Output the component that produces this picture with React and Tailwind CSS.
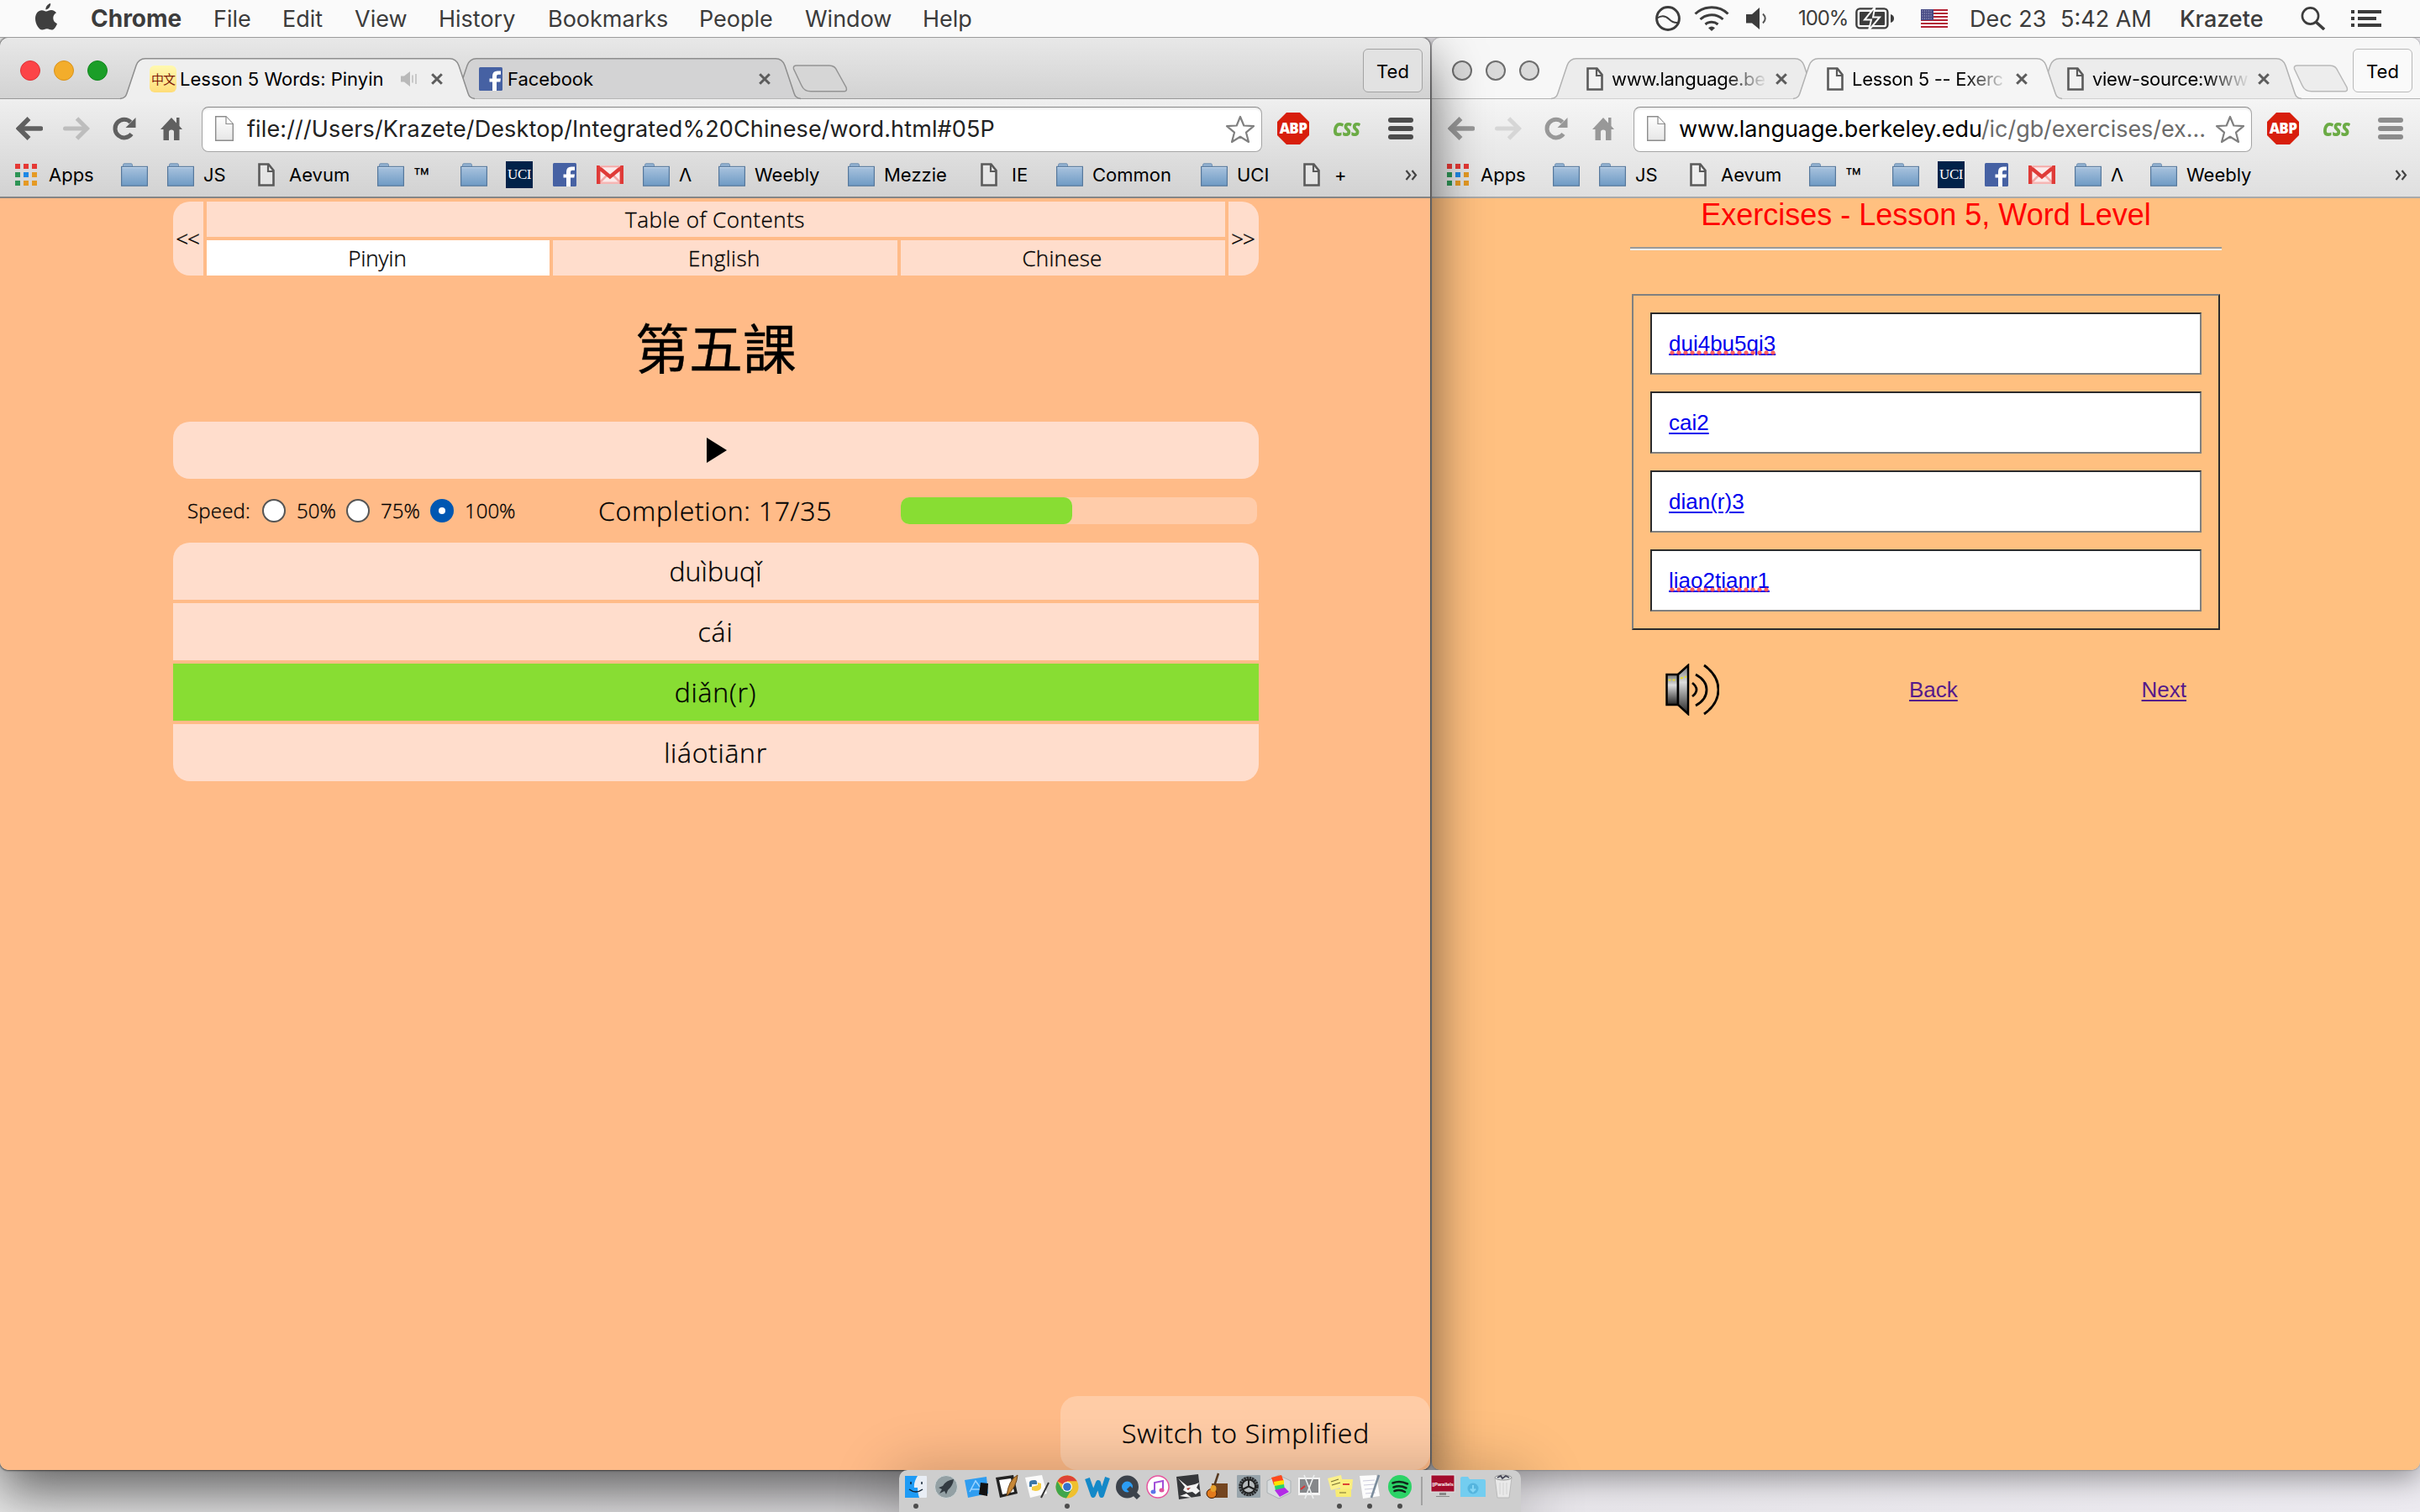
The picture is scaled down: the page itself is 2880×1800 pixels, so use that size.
import React from "react";

/* ---------- small glyphs ---------- */

const PageIcon = ({ className = "w-5 h-7" }) => (
  <svg viewBox="0 0 20 28" className={className} fill="none">
    <path d="M1.5 1.5H12.5L18.5 9V26.5H1.5Z" fill="#fff" fillOpacity=".35" stroke="#5a5a5a" strokeWidth="2.6" />
    <path d="M12 2V10H18" stroke="#5a5a5a" strokeWidth="2.2" />
  </svg>
);

const PlainPage = () => (
  <svg viewBox="0 0 22 31" className="w-[22px] h-[31px]">
    <defs>
      <linearGradient id="pg" x1="0" y1="0" x2="0" y2="1">
        <stop offset="0" stopColor="#fff" />
        <stop offset="1" stopColor="#e6e6e6" />
      </linearGradient>
    </defs>
    <path d="M.7 .7H13L21.3 9.5V29.3H.7Z" fill="url(#pg)" stroke="#8c8c8c" strokeWidth="1.4" />
    <path d="M13 1V9.5H21" fill="#fff" stroke="#8c8c8c" strokeWidth="1.2" />
  </svg>
);

const Folder = () => (
  <svg viewBox="0 0 32 28" className="w-8 h-7">
    <defs>
      <linearGradient id="fold" x1="0" y1="0" x2="0" y2="1">
        <stop offset="0" stopColor="#a9c3de" />
        <stop offset="1" stopColor="#6e9ac4" />
      </linearGradient>
    </defs>
    <path d="M2.5 5V2.5Q2.5 .8 4 .8H12Q13.5 .8 13.5 2.5V5" fill="#93b2d2" stroke="#6f8fb0" />
    <rect x=".6" y="4.4" width="30.8" height="22.8" fill="url(#fold)" stroke="#56789c" strokeWidth="1.2" />
    <path d="M1.5 5.4H30.5" stroke="#c3d6ea" />
  </svg>
);

const Apps = () => (
  <span className="grid grid-cols-3 gap-x-1 gap-y-1 w-[26px] ml-[3px]">
    {["bg-[#e53935]", "bg-[#e53935]", "bg-[#e53935]", "bg-[#2e9455]", "bg-[#1e88e5]", "bg-[#e59a24]", "bg-[#2e9455]", "bg-[#e59a24]", "bg-[#e59a24]"].map((c, i) => (
      <span key={i} className={`h-1.5 ${c}`} />
    ))}
  </span>
);

const Uci = () => (
  <span className="w-8 h-8 bg-[#012249] text-white text-[17px] leading-8 text-center font-['Liberation_Serif',serif] tracking-[-0.5px]">UCI</span>
);

const Fb = () => (
  <svg viewBox="0 0 28 28" className="w-7 h-7 ml-0.5">
    <rect width="28" height="28" rx="1.5" fill="#4661a3" />
    <path d="M16 28V17.5H12.5V13.5H16V10.5Q16 4.5 22 4.5H26V8.8H23Q21 8.8 21 11V13.5H26L25.3 17.5H21V28Z" fill="#fff" />
  </svg>
);

const Gmail = () => (
  <svg viewBox="0 0 32 22" className="w-8 h-[22px]">
    <rect width="32" height="22" fill="#fbeaea" />
    <path d="M4 20L13 11M28 20L19 11" stroke="#f3a9a7" strokeWidth="2.5" />
    <path d="M4 20.8H28" stroke="#f6b6b4" strokeWidth="2.5" />
    <path d="M2.2 22V2L16 13.5L29.8 2V22" fill="none" stroke="#df3b38" strokeWidth="4.4" />
    <path d="M4.5 1.2H27.5" stroke="#f3a9a7" strokeWidth="2" />
  </svg>
);

const Close = () => (
  <svg viewBox="0 0 16 16" className="w-4 h-4 shrink-0">
    <path d="M2.2 2.2L13.8 13.8M13.8 2.2L2.2 13.8" stroke="#5c5c5c" strokeWidth="3" />
  </svg>
);

const Cjk = () => (
  <span className="w-8 h-8 rounded-md bg-linear-to-b from-[#fff9b0] to-[#ffdd78] text-[#7d1a08] text-[15px] leading-8 text-center tracking-[-1px] font-['Noto_Sans_CJK_SC',sans-serif] whitespace-nowrap">中文</span>
);

/* ---------- menu bar ---------- */

const menus = [
  ["File", "w-[82px]"],
  ["Edit", "w-[86px]"],
  ["View", "w-[100px]"],
  ["History", "w-[130px]"],
  ["Bookmarks", "w-[180px]"],
  ["People", "w-[126px]"],
  ["Window", "w-[140px]"],
  ["Help", "w-[60px]"],
];

function MenuBar() {
  return (
    <header className="relative z-30 flex items-center h-11 w-full bg-[#fafafa] text-[27px] leading-none text-[#3c3c3c] whitespace-nowrap">
      <svg viewBox="0 0 26 32" className="w-[26px] h-8 ml-[42px] mb-1 shrink-0" fill="#3f3f3f">
        <path d="M18.2 0C18.4 3.8 15.5 7.4 12.4 7.6C12 4 15 .5 18.2 0Z" />
        <path d="M13.2 9.6C14.6 9.6 16.3 8 19 8C21.6 8 23.7 9.4 25 11.3C19.5 14.4 20.4 22 26 24.2C24.8 27.5 22.3 31.6 19.5 31.6C17.3 31.6 16.6 30.3 13.9 30.3C11.2 30.3 10.3 31.6 8.3 31.6C4.4 31.6 0 24.3 0 18.2C0 11.7 3.9 8.2 7.7 8.2C10.2 8.2 12 9.6 13.2 9.6Z" />
      </svg>
      <span className="ml-10 w-[146px] text-[28px] font-bold shrink-0">Chrome</span>
      {menus.map(([t, w]) => (
        <span key={t} className={`${w} shrink-0`}>{t}</span>
      ))}
      <div className="ml-auto flex items-center mr-[46px]">
        <svg viewBox="0 0 30 30" className="w-[30px] h-[30px]" fill="none" stroke="#3c3c3c">
          <circle cx="15" cy="15" r="13.4" strokeWidth="3" />
          <path d="M2 14.5C9 10 13 12.5 16 15.5C19 18.5 23 20.5 27 20" strokeWidth="2" />
        </svg>
        <svg viewBox="0 0 42 30" className="w-[42px] h-[30px] ml-4" fill="none" stroke="#3c3c3c" strokeWidth="3">
          <path d="M1.5 9.5C12 -.8 30 -.8 40.5 9.5" />
          <path d="M7.5 16C15 9 27 9 34.5 16" />
          <path d="M13.5 22C18 18.2 24 18.2 28.5 22" />
          <path d="M17 26.2Q21 23 25 26.2L21 30Z" fill="#3c3c3c" stroke="none" />
        </svg>
        <svg viewBox="0 0 26 26" className="w-[26px] h-[26px] ml-5">
          <path d="M0 8H7L16 0V26L7 18.5H0Z" fill="#3c3c3c" />
          <path d="M20 7.5Q25.5 13 20 18.5" fill="none" stroke="#555" strokeWidth="2" />
        </svg>
        <span className="ml-9 w-[68px] text-[24px] tracking-[-1.1px]">100%</span>
        <svg viewBox="0 0 46 26" className="w-[46px] h-[26px]">
          <rect x="1.4" y="1.4" width="37" height="23" rx="4" fill="none" stroke="#3c3c3c" strokeWidth="2.4" />
          <rect x="5" y="5" width="30" height="16" rx="1" fill="#3c3c3c" />
          <path d="M42 8Q46 9 46 13Q46 17 42 18Z" fill="#3c3c3c" />
          <path d="M23.5 -1L11 14.5H19L16 27L29 11.5H21Z" fill="#3c3c3c" stroke="#fafafa" strokeWidth="2" />
        </svg>
        <svg viewBox="0 0 32 22" className="w-8 h-[22px] ml-8">
          <rect width="32" height="22" fill="#fff" />
          {[0, 1, 2, 3, 4, 5].map((i) => (
            <rect key={i} y={i * 4} width="32" height="2" fill="#b22234" />
          ))}
          <rect width="15" height="13" fill="#474a85" />
          {[2, 5, 8, 11].map((y) => (
            <path key={y} d={`M1.5 ${y}H14`} stroke="#c9cbe2" strokeWidth="1" strokeDasharray="1 1.5" />
          ))}
        </svg>
        <span className="ml-[26px] w-[108px]">Dec 23</span>
        <span className="w-[142px]">5:42 AM</span>
        <span className="w-36 font-medium">Krazete</span>
        <svg viewBox="0 0 30 28" className="w-[30px] h-7" fill="none" stroke="#3c3c3c">
          <circle cx="11.5" cy="11" r="9.6" strokeWidth="2.6" />
          <path d="M18 18L28 27" strokeWidth="3.6" />
        </svg>
        <svg viewBox="0 0 36 20" className="w-9 h-5 ml-[30px]" fill="#3c3c3c">
          <path d="M0 0H4V4H0ZM0 8H4V12H0ZM0 16H4V20H0ZM8 0H36V4H8ZM8 8H30V12H8ZM8 16H36V20H8Z" />
        </svg>
      </div>
    </header>
  );
}

/* ---------- browser chrome ---------- */

function Tab({ w, width, overlap, pad, icon, title, fade, sound, front, dim }) {
  const outline = `M0 48.5C6 47.5 7 45 8 42L19 9Q22 .8 30 .8H${w - 30}Q${w - 22} .8 ${w - 19} 9L${w - 8} 42C${w - 7} 45 ${w - 6} 47.5 ${w} 48.5`;
  const fill = front ? (dim ? "#f5f5f5" : "#efefef") : dim ? "#ececec" : "#d3d3d4";
  return (
    <div className={`relative flex items-center h-[49px] shrink-0 ${width} ${overlap} ${pad} ${front ? "z-10" : ""}`}>
      <svg viewBox={`0 0 ${w} 49`} className="absolute inset-0 w-full h-full overflow-visible">
        <path d={outline + (front ? "V50H0Z" : "Z")} fill={fill} />
        <path d={outline} fill="none" stroke={dim ? "#b2b2b2" : "#8e8e8e"} strokeWidth="1.5" />
      </svg>
      <span className="relative w-8 h-8 flex items-center justify-center shrink-0">{icon}</span>
      <span className={`relative ml-1 flex-1 whitespace-nowrap text-[22px] leading-8 text-black ${fade ? "tracking-[-0.3px] [mask-image:linear-gradient(to_right,black_72%,transparent)]" : ""}`}>{title}</span>
      {sound && (
        <svg viewBox="0 0 20 18" className="relative w-5 h-[18px] mr-[7px]">
          <path d="M0 5.5H4L11 0V18L4 12.5H0Z" fill="#b9b9b9" />
          <path d="M14 4.5V13.5M18 3V15" stroke="#c4c4c4" strokeWidth="1.8" />
        </svg>
      )}
      <span className="relative flex ml-2"><Close /></span>
    </div>
  );
}

const NewTab = ({ dim }) => (
  <svg viewBox="0 0 66 33" className="w-[66px] h-[33px] mb-2 shrink-0 -ml-2.5">
    <path d="M5 1H44Q51 1 53.5 8L64 27Q65.5 31.5 62 31.8H22Q14 31.8 11 25L1.5 5Q.5 1 5 1Z" fill={dim ? "#ededed" : "#d6d6d6"} stroke={dim ? "#b9b9b9" : "#949494"} strokeWidth="1.5" />
  </svg>
);

const marks = [
  { w: "w-[129px]", icon: <Apps />, label: "Apps" },
  { w: "w-[55px]", icon: <Folder /> },
  { w: "w-[102px]", icon: <Folder />, label: "JS" },
  { w: "w-[148px]", icon: <PageIcon className="w-5 h-7 mx-1.5" />, label: "Aevum" },
  { w: "w-[99px]", icon: <Folder />, label: <span className="text-[31px] leading-8 pt-2">™</span> },
  { w: "w-[54px]", icon: <Folder /> },
  { w: "w-[54px]", icon: <Uci /> },
  { w: "w-[54px]", icon: <Fb /> },
  { w: "w-[55px]", icon: <Gmail /> },
  { w: "w-[90px]", icon: <Folder />, label: "Λ" },
  { w: "w-[154px]", icon: <Folder />, label: "Weebly" },
  { w: "w-[152px]", icon: <Folder />, label: "Mezzie" },
  { w: "w-[96px]", icon: <PageIcon className="w-5 h-7 mx-1.5" />, label: "IE" },
  { w: "w-[172px]", icon: <Folder />, label: "Common" },
  { w: "w-[116px]", icon: <Folder />, label: "UCI" },
  { w: "w-[70px]", icon: <PageIcon className="w-5 h-7 mx-1.5" />, label: "+" },
];

function Toolbar({ dim, url, count }) {
  const c = dim ? "#989898" : "#606060";
  const off = dim ? "#d6d6d6" : "#bdbdbd";
  return (
    <div className={`h-[118px] border-b-2 bg-linear-to-b ${dim ? "from-[#f5f5f5] to-[#dfdfdf] border-[#a9a9a9]" : "from-[#efefef] to-[#d2d2d2] border-[#858585]"}`}>
      <div className="flex items-center h-[70px] pl-[19px]">
        <svg viewBox="0 0 32 28" className="w-8 h-7 shrink-0" fill="none" stroke={c} strokeWidth="5.5">
          <path d="M4 14H29.5" strokeLinecap="round" />
          <path d="M15.5 2L3.5 14L15.5 26" />
        </svg>
        <svg viewBox="0 0 32 28" className="w-8 h-7 ml-6 shrink-0" fill="none" stroke={off} strokeWidth="5">
          <path d="M28 14H2.5" strokeLinecap="round" />
          <path d="M16.5 2L28.5 14L16.5 26" />
        </svg>
        <svg viewBox="0 0 28 28" className="w-7 h-7 ml-[27px] shrink-0">
          <path d="M22.5 20.5A10.8 10.8 0 1 1 21.5 6.5" fill="none" stroke={c} strokeWidth="5" />
          <path d="M27.5 1V13H15.5Z" fill={c} />
        </svg>
        <svg viewBox="0 0 26 28" className="w-[26px] h-7 ml-[29px] shrink-0" fill={c}>
          <path d="M13 1L0 15H3.5V28H10V18Q10 15.5 13 15.5Q16 15.5 16 18V28H22.5V15H26L22.5 11V1H19V7.5Z" />
        </svg>
        <div className="flex items-center flex-1 min-w-0 h-[54px] mt-px ml-[23px] pl-[15px] pr-[7px] bg-white rounded-lg border-[1.5px] border-[#a5a5a5] border-t-[#8a8a8a] shadow-[inset_0_2px_2px_rgba(0,0,0,.08)]">
          <PlainPage />
          <span className={`flex-1 ml-4 whitespace-nowrap text-[27px] leading-9 text-[#222] ${dim ? "-tracking-[.05px]" : "tracking-[.13px]"}`}>{url}</span>
          <svg viewBox="0 0 36 34" className="w-9 h-[34px]">
            <path d="M18 2L22.3 12.5L34 13.2L25 20.7L28 32L18 25.8L8 32L11 20.7L2 13.2L13.7 12.5Z" fill="#fff" stroke="#808080" strokeWidth="2.2" strokeLinejoin="round" />
          </svg>
        </div>
        <div className="flex items-center w-[200px] shrink-0 pl-[18px]">
          <span className="w-[38px] h-[38px] bg-[#d81e0c] text-white text-[17px] font-extrabold leading-[38px] text-center tracking-[-0.6px] font-['Open_Sans',sans-serif] [clip-path:polygon(29%_0,71%_0,100%_29%,100%_71%,71%_100%,29%_100%,0_71%,0_29%)]">ABP</span>
          <span className="ml-7 w-10 text-[23px] leading-8 italic font-extrabold text-[#6bab45] tracking-[-0.8px] font-['Open_Sans',sans-serif] [transform:scaleX(.86)] origin-left">CSS</span>
          <span className={`ml-[26px] flex flex-col gap-1 w-[30px] ${dim ? "opacity-60" : ""}`}>
            <span className="h-1.5 rounded-full bg-[#4c4c4c]" />
            <span className="h-1.5 rounded-full bg-[#4c4c4c]" />
            <span className="h-1.5 rounded-full bg-[#4c4c4c]" />
          </span>
        </div>
      </div>
      <div className="flex items-center h-10 pl-[15px] text-[22px] leading-8 text-black">
        {marks.slice(0, count).map((m, i) => (
          <span key={i} className={`flex items-center shrink-0 whitespace-nowrap ${m.w}`}>
            <span className="flex items-center w-8 mr-[11px] shrink-0">{m.icon}</span>
            {m.label}
          </span>
        ))}
        <svg viewBox="0 0 15 13" className="w-[15px] h-[13px] ml-auto mr-[15px]" fill="none" stroke="#444" strokeWidth="2.2">
          <path d="M1.5 1L6 6.5L1.5 12M8.5 1L13 6.5L8.5 12" />
        </svg>
      </div>
    </div>
  );
}

const Ted = ({ dim }) => (
  <span className={`ml-auto mr-[9px] self-start mt-[13px] w-[71px] h-[52px] pt-0.5 rounded-md border-[1.5px] text-[22px] leading-[48px] text-center text-black ${dim ? "border-[#b9b9b9] bg-[#fafafa]" : "border-[#a3a3a3] bg-[#e2e2e2]"}`}>Ted</span>
);

/* ---------- left page ---------- */

const answers = [
  ["duìbuqǐ", "rounded-t-[20px] bg-[#fdc]", "tracking-[.1px]"],
  ["cái", "bg-[#fdc]", "tracking-[.9px]"],
  ["diǎn(r)", "bg-[#8d3]", "tracking-[.8px]"],
  ["liáotiānr", "rounded-b-[20px] bg-[#fdc]", "tracking-[.7px]"],
];

const speeds = [
  ["50%", "w-[74px]", false],
  ["75%", "w-[74px]", false],
  ["100%", "w-[70px]", true],
];

function PinyinPage() {
  return (
    <main className="relative flex-1 bg-[#fb8] text-black font-[350] font-['Open_Sans','Noto_Sans_CJK_TC',sans-serif] [-webkit-text-stroke:.35px_black]">
      <div className="flex flex-col w-[1292px] ml-[206px] pt-1">
        <nav className="grid grid-cols-[36px_408px_410px_386px_36px] grid-rows-[42px_42px] gap-1 text-[26px] leading-[42px] text-center tracking-[.5px]">
          <span className="row-span-2 flex items-center justify-center rounded-l-[20px] bg-[#fdc] tracking-[-1px] pr-0.5">&lt;&lt;</span>
          <span className="col-span-3 bg-[#fdc] pr-0.5">Table of Contents</span>
          <span className="row-span-2 flex items-center justify-center rounded-r-[20px] bg-[#fdc] tracking-[-1px] pr-0.5">&gt;&gt;</span>
          <span className="bg-white tracking-normal pr-0.5">Pinyin</span>
          <span className="bg-[#fdc] pr-0.5">English</span>
          <span className="bg-[#fdc] tracking-[.25px] pr-0.5">Chinese</span>
        </nav>
        <h1 className="flex items-center justify-center h-[174px] pb-[9px] text-[64px] leading-[64px] font-normal font-['Noto_Sans_CJK_TC',sans-serif]">第五課</h1>
        <div className="flex items-center justify-center h-[68px] pl-0.5 rounded-[20px] bg-[#fdc]">
          <svg viewBox="0 0 24 30" className="w-6 h-[30px]"><path d="M0 0L24 15L0 30Z" /></svg>
        </div>
        <div className="flex items-center h-[76px]">
          <div className="flex items-center w-[506px] pl-[17px] text-[24px] leading-8">
            <span className="w-[89px] tracking-[.2px]">Speed:</span>
            {speeds.map(([t, w, on]) => (
              <span key={t} className="flex items-center">
                <span className={`flex items-center justify-center w-7 h-7 rounded-full mr-[13px] ${on ? "bg-[#0057b2]" : "bg-white border-2 border-[#555]"}`}>
                  {on && <span className="w-2 h-2 rounded-full bg-white" />}
                </span>
                <span className={`${w} -mr-[15px]`}>{t}</span>
              </span>
            ))}
          </div>
          <span className="w-[360px] text-[32px] leading-10 tracking-[.7px]">Completion: 17/35</span>
          <div className="w-[424px] h-8 rounded-[10px] bg-[#fca]">
            <div className="w-[204px] h-8 rounded-[10px] bg-[#8d3]" />
          </div>
        </div>
        <ul className="flex flex-col gap-1 text-[32px] leading-[68px] text-center">
          {answers.map(([t, c, tr]) => (
            <li key={t} className={`h-[68px] pr-px ${c} ${tr}`}>{t}</li>
          ))}
        </ul>
      </div>
      <div className="absolute right-0 bottom-0 flex items-center justify-center w-[440px] h-[88px] pl-px rounded-[20px] bg-white/25 text-[32px] tracking-[.82px]">Switch to Simplified</div>
    </main>
  );
}

/* ---------- right page ---------- */

const words = [["dui4bu5qi3", true], ["cai2", false], ["dian(r)3", false], ["liao2tianr1", true]];

function ExercisePage() {
  return (
    <main className="flex-1 flex flex-col items-center bg-[#ffc080] text-[26px] font-['Liberation_Sans',Arial,sans-serif]">
      <h1 className="h-10 text-[36px] leading-10 text-[#f00]">Exercises - Lesson 5, Word Level</h1>
      <div className="mt-[18px] w-[704px] h-1 border-t-2 border-b-2 border-t-[#9a9a9a] border-b-[#eee]" />
      <div className="mt-[52px] flex flex-col gap-5 w-[700px] h-[400px] p-5 border-2 border-t-[#808080] border-l-[#808080] border-r-[#2b2b2b] border-b-[#2b2b2b]">
        {words.map(([t, bad]) => (
          <div key={t} className="flex items-center h-[74px] pl-5 bg-white border-2 border-t-[#2b2b2b] border-l-[#2b2b2b] border-r-[#808080] border-b-[#808080]">
            <span className="relative text-[#00e] underline underline-offset-[3px] decoration-2 leading-8">
              {t}
              {bad && <span className="absolute left-0 right-0 bottom-0.5 h-1.5 bg-[radial-gradient(circle,rgba(255,70,70,.85)_2.2px,transparent_3px)] bg-[length:8px_6px]" />}
            </span>
          </div>
        ))}
      </div>
      <div className="flex items-center mt-10 w-[620px] h-[62px] text-[#551a8b] underline decoration-2 underline-offset-[3px]">
        <svg viewBox="0 0 64 62" className="w-16 h-[62px]">
          <defs>
            <linearGradient id="spk" x1="0" y1="0" x2="0" y2="1">
              <stop offset="0" stopColor="#777" />
              <stop offset=".35" stopColor="#ddd" />
              <stop offset="1" stopColor="#222" />
            </linearGradient>
          </defs>
          <path d="M1.5 13H15V49H1.5Z" fill="url(#spk)" stroke="#000" strokeWidth="2.5" />
          <path d="M15 13L27 2V60L15 49Z" fill="url(#spk)" stroke="#000" strokeWidth="2.5" />
          <path d="M3.5 19.5H13M18 17.5L25 15.5" stroke="#e8dc30" strokeWidth="2" strokeDasharray="3 2" />
          <path d="M32 23Q42 31 32 39M36 13Q49 20 49 31Q49 43 36 50M46 2Q63 14 63 31Q63 48 46 60" fill="none" stroke="#000" strokeWidth="2.8" />
        </svg>
        <span className="ml-[226px]">Back</span>
        <span className="ml-auto">Next</span>
      </div>
    </main>
  );
}

/* ---------- dock ---------- */

const dock = [
  { dot: 1, art: <><rect x="1" y="1" width="26" height="26" rx="1" fill="#e9eef5" /><path d="M1 1H16Q11 9 12 15H16Q16 21 18 27H1Z" fill="#1e9bf5" /><path d="M8 8V11M21 8V11" stroke="#123" strokeWidth="1.5" /><path d="M6 17Q14 23 22 17" fill="none" stroke="#123" strokeWidth="1.5" /></> },
  { art: <><circle cx="14" cy="14" r="13.5" fill="#93a0a4" stroke="#cfd6d8" /><path d="M23 5Q14 6 10 13L5 15L9 17L6 22L12 19L14 23L16 18Q22 13 23 5Z" fill="#333b42" /></> },
  { art: <><path d="M0 6L26 2L28 22L4 27Z" fill="#2f9df0" /><path d="M6 20L13 7L21 18M8 17H20" fill="none" stroke="#9bd4ff" strokeWidth="1.5" /><path d="M19 9L28 10L27 25L17 23Z" fill="#111" /></> },
  { art: <><path d="M1 3L22 0L27 22L6 27Z" fill="#222" /><path d="M5 6L19 4L23 20L9 23Z" fill="#fff" /><path d="M27 0Q16 6 14 25Q26 14 27 0Z" fill="#c78838" stroke="#6d4417" /></> },
  { art: <><path d="M0 3L20 0L26 22L6 27Z" fill="#fafafa" /><path d="M5 14V9Q5 6 11 6Q15 6 14 11H8V14Z" fill="#3b76a8" /><path d="M8 18V14L15 12V9L19 10V15Q18 19 12 19Z" fill="#f5cd43" /><path d="M28 9L19 27" stroke="#333" strokeWidth="2" /></> },
  { dot: 1, art: <><circle cx="14" cy="14" r="13.5" fill="#efc02e" /><path d="M14 14L2.3 7.2A13.5 13.5 0 0 1 25.7 7.2H14Z" fill="#de4335" /><path d="M2.3 7.2A13.5 13.5 0 0 0 13 27.5L19.5 17L14 14L8 17Z" fill="#3fa64b" /><circle cx="14" cy="14" r="6" fill="#fff" /><circle cx="14" cy="14" r="4.8" fill="#3473cb" /></> },
  { art: <path d="M2 4L9 24L15 9L19 24L26 3" fill="none" stroke="#1489c8" strokeWidth="6" strokeLinejoin="round" /> },
  { art: <><circle cx="13.5" cy="14" r="10" fill="#2c9df4" stroke="#3b424b" strokeWidth="7" /><path d="M15 15L27 27" stroke="#3b424b" strokeWidth="6" /></> },
  { art: <><circle cx="14" cy="14" r="13" fill="#fff" stroke="#e755a0" strokeWidth="1.5" /><path d="M10 20V9L20 7V18" fill="none" stroke="#a24fd8" strokeWidth="2" /><ellipse cx="8.5" cy="20" rx="3" ry="2.5" fill="#5b76e8" /><ellipse cx="18.5" cy="18" rx="3" ry="2.5" fill="#e0509c" /></> },
  { art: <><path d="M0 2L26 -1L29 25L3 29Z" fill="#35373a" /><path d="M2 4L8 9L13 13L22 11L27 9L24 15L28 19L23 23L19 20L13 21L8 18L10 14Z" fill="#f2f2f2" /><path d="M4 25L12 22L18 27Z" fill="#f2f2f2" /><path d="M12 16L17 15L14 18Z" fill="#a3241d" /></> },
  { art: <><path d="M6 10H25V27H6Z" fill="#74451f" /><path d="M8 16L14 -2" stroke="#57391f" strokeWidth="2.5" /><ellipse cx="6" cy="22" rx="6" ry="5.5" fill="#e27a1b" stroke="#3b1a08" /><ellipse cx="8" cy="16" rx="3.5" ry="4" fill="#e9a02a" /></> },
  { art: <><rect width="28" height="27" rx="1" fill="#98a4ab" /><circle cx="14" cy="13.5" r="9.8" fill="none" stroke="#2b2d2f" strokeWidth="4" strokeDasharray="2.5 .6" /><circle cx="14" cy="13.5" r="8" fill="#b5b9bb" stroke="#222" strokeWidth="2" /><path d="M14 13.5V6M14 13.5L7 17M14 13.5L21 17" stroke="#222" strokeWidth="2" /></> },
  { art: <><path d="M0 7L14 0L28 7V21L14 28L0 21Z" fill="#d8dcde" stroke="#a9b0b3" /><path d="M5 3L17 0L20 8L8 12Z" fill="#ff4a1c" /><path d="M8 8L20 6L20 13L9 15Z" fill="#ffe500" /><path d="M9 13L20 11L21 17L10 19Z" fill="#27d26b" /><path d="M9 18L21 15L26 20L15 26Z" fill="#b32be6" /></> },
  { art: <><rect x="1" y="3" width="26" height="21" fill="#f4f4f4" /><rect x="3" y="5" width="22" height="16" fill="#85878a" /><path d="M8 0L19 28M20 0L9 28" stroke="#eceeef" strokeWidth="1.6" /><path d="M4 17L9 13" stroke="#d33" strokeWidth="2" /></> },
  { dot: 1, art: <><path d="M0 4L16 0L19 14L4 18Z" fill="#fbf08d" /><path d="M15 5L30 5L29 17L15 17Z" fill="#fbee7f" /><path d="M9 17L28 16L28 26L10 26Z" fill="#f8ec74" /><path d="M4 8L13 5M5 12L15 9M14 21H22" stroke="#776f30" strokeWidth="1.2" /><path d="M18 11H26" stroke="#d43" strokeWidth="2" /></> },
  { dot: 1, art: <><path d="M2 1L22 0L26 25L6 28Z" fill="#fcfcfc" /><path d="M6 7L20 6M7 12L20 11M8 17L21 16M9 22L21 21" stroke="#ccd" /><path d="M25 0L16 27" stroke="#7b8c9c" strokeWidth="2.6" /></> },
  { dot: 1, art: <><circle cx="14" cy="14" r="14" fill="#2bd366" /><path d="M5.5 9.5Q14 6 23 10.5M6.5 14.5Q14 11.5 21.5 15.5M7.5 19Q14 16.5 20 20" fill="none" stroke="#10251a" strokeWidth="2.6" strokeLinecap="round" /></> },
];

function Dock() {
  return (
    <footer className="absolute left-[1070px] bottom-0 z-20 flex pl-[2px] w-[740px] h-[50px] rounded-t-[10px] bg-[#cecece] shadow-[0_10px_70px_10px_rgba(0,0,0,.22)]">
      {dock.map((d, i) => (
        <span key={i} className="flex flex-col items-center w-9 pt-1.5 shrink-0">
          <svg viewBox="0 0 28 28" className="w-7 h-7 overflow-visible">{d.art}</svg>
          {d.dot && <span className="mt-1.5 w-1.5 h-1.5 rounded-full bg-[#4d4d4d]" />}
        </span>
      ))}
      <span className="ml-[7px] mt-2 w-0.5 h-[34px] bg-[#a2a2a2]" />
      <svg viewBox="0 0 30 28" className="w-[30px] h-7 ml-[9px] mt-[5px]">
        <rect width="30" height="22" rx="1" fill="#dadada" />
        <rect x="1.5" y="1.5" width="27" height="19" fill="#a30c2c" />
        <text x="15" y="14" fontSize="5.5" fontWeight="700" fill="#fff" textAnchor="middle" fontFamily="Liberation Sans">||Parallels</text>
        <path d="M11 22H19V25H11ZM7 26H23V27H7Z" fill="#888" />
      </svg>
      <svg viewBox="0 0 30 25" className="w-[30px] h-[25px] ml-1.5 mt-2">
        <path d="M0 2Q0 0 2 0H9L11 3H28Q30 3 30 5V24H0Z" fill="#73cdf0" />
        <circle cx="15" cy="14" r="6.5" fill="#55b5de" />
        <path d="M15 10V17M12 14.5L15 17.5L18 14.5" fill="none" stroke="#84d6f5" strokeWidth="2" />
      </svg>
      <svg viewBox="0 0 22 29" className="w-[22px] h-[29px] ml-[10px] mt-[5px]">
        <path d="M1 4H21L18 28H4Z" fill="#e9e9e9" stroke="#b9b9b9" />
        <ellipse cx="11" cy="4" rx="10" ry="3" fill="#d9dcdc" stroke="#999" />
        <path d="M4 4L8 2L10 5L14 2L18 4" fill="none" stroke="#445" strokeWidth="1.8" />
        <path d="M7 10V24M11 10V25M15 10V24" stroke="#d2d2d2" />
      </svg>
    </footer>
  );
}

/* ---------- desktop ---------- */

export default function App() {
  return (
    <div className="relative flex flex-col w-[2880px] h-[1800px] overflow-hidden bg-linear-to-r from-[#ebebeb] via-[#e4e2e6] to-[#eceaf0] font-['Inter',sans-serif]">
      <MenuBar />
      <div className="h-px w-full bg-[#9b9b9b] relative z-30" />
      <div className="flex h-[1705px] w-full">
        <section className="relative z-10 w-[1702px] shrink-0 mr-0.5 rounded-[10px] shadow-[0_26px_64px_rgba(0,0,0,.6),0_0_2px_1px_rgba(60,60,60,.7)]">
          <div className="flex flex-col h-full rounded-[10px] overflow-hidden">
            <div className="flex items-end h-[73px] bg-linear-to-b from-[#e8e8e8] to-[#d2d2d2] shadow-[inset_0_-1px_0_#999]">
              <div className="flex gap-4 self-start mt-[27px] ml-6 w-[119px] shrink-0">
                <span className="w-6 h-6 rounded-full bg-[#fc4447] border border-[#dc3236]" />
                <span className="w-6 h-6 rounded-full bg-[#f3ad2b] border border-[#d8921c]" />
                <span className="w-6 h-6 rounded-full bg-[#1b9e28] border border-[#12861e]" />
              </div>
              <Tab w={422} width="w-[422px]" overlap="" pad="pl-[35px] pr-[37px]" icon={<Cjk />} title="Lesson 5 Words: Pinyin" sound front />
              <Tab w={416} width="w-[416px]" overlap="-ml-7" pad="pl-[31px] pr-[35px]" icon={<span className="-ml-0.5 flex"><Fb /></span>} title="Facebook" />
              <NewTab />
              <Ted />
            </div>
            <Toolbar url="file:///Users/Krazete/Desktop/Integrated%20Chinese/word.html#05P" count={16} />
            <PinyinPage />
          </div>
        </section>
        <section className="w-[1176px] rounded-[10px] shadow-[0_10px_34px_rgba(0,0,0,.38),0_0_2px_rgba(60,60,60,.6)]">
          <div className="flex flex-col h-full rounded-[10px] overflow-hidden">
            <div className="flex items-end h-[73px] bg-[#f7f7f7] shadow-[inset_0_-1px_0_#b5b5b5]">
              <div className="flex gap-4 self-start mt-[27px] ml-6 w-[118px] shrink-0">
                <span className="w-6 h-6 rounded-full bg-[#dadada] border-2 border-[#6e6e6e]" />
                <span className="w-6 h-6 rounded-full bg-[#dadada] border-2 border-[#6e6e6e]" />
                <span className="w-6 h-6 rounded-full bg-[#dadada] border-2 border-[#6e6e6e]" />
              </div>
              <Tab w={320} width="w-[320px]" overlap="" pad="pl-9 pr-[38px]" icon={<PageIcon />} title="www.language.be" fade dim />
              <Tab w={320} width="w-[320px]" overlap="-ml-8" pad="pl-[34px] pr-10" icon={<PageIcon />} title="Lesson 5 -- Exerc" fade front dim />
              <Tab w={318} width="w-[318px]" overlap="-ml-[33px]" pad="pl-[33px] pr-[37px]" icon={<PageIcon />} title="view-source:www" fade dim />
              <NewTab dim />
              <Ted dim />
            </div>
            <Toolbar dim count={11} url={<><span className="text-black">www.language.berkeley.edu</span><span className="text-[#6b6b6b]">/ic/gb/exercises/ex...</span></>} />
            <ExercisePage />
          </div>
        </section>
      </div>
      <Dock />
    </div>
  );
}
